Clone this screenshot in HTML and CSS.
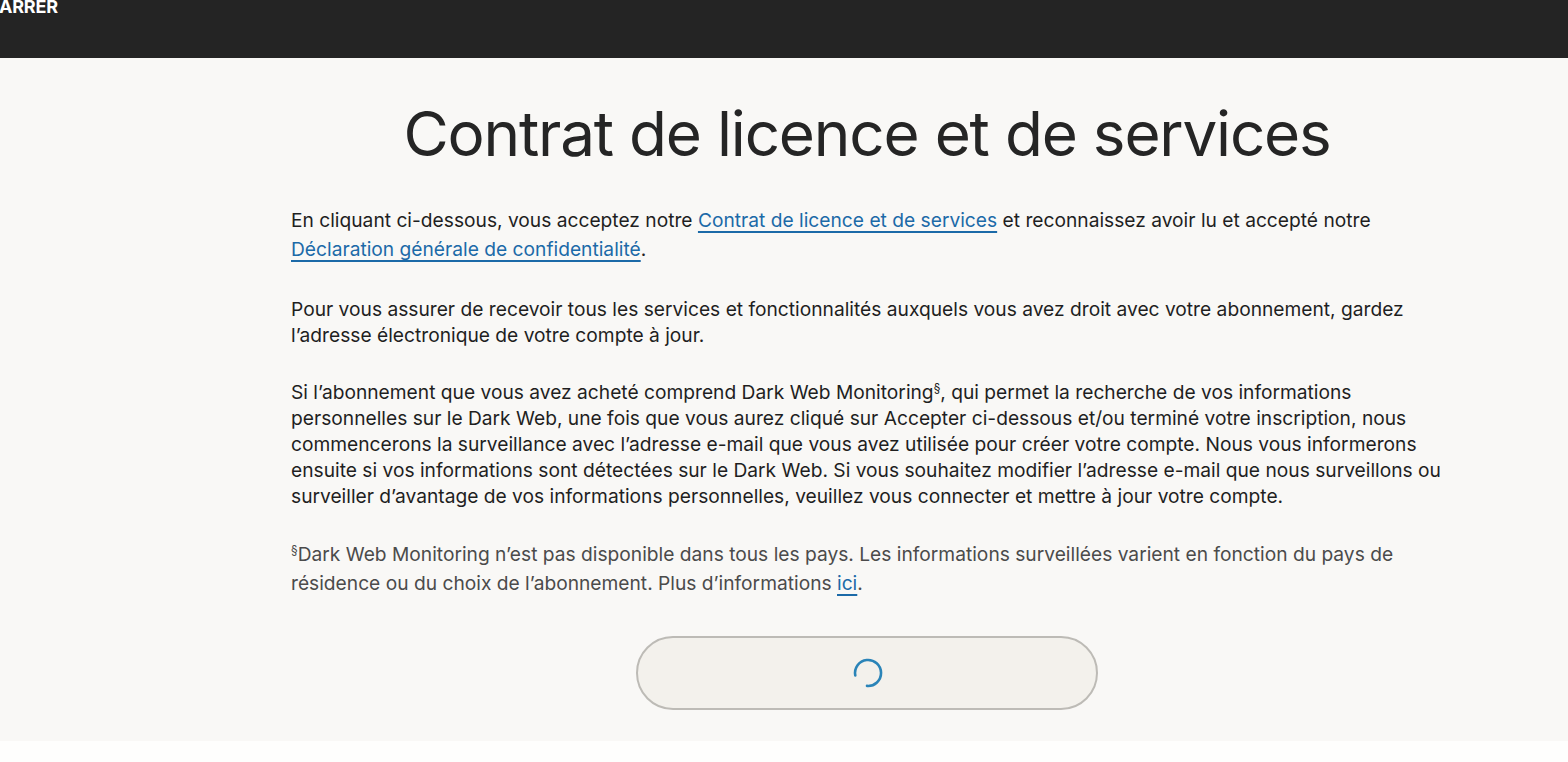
FILE: index.html
```html
<!DOCTYPE html>
<html lang="fr">
<head>
<meta charset="utf-8">
<title>Contrat de licence et de services</title>
<link rel="stylesheet" href="styles.css">
</head>
<body>
<header class="topbar">
  <span class="topbar-label">ARRER</span>
</header>
<main class="page">
  <div class="content">
    <h1 class="title">Contrat de licence et de services</h1>
    <p class="para para-links para-first">En cliquant ci-dessous, vous acceptez notre <a class="link" href="#">Contrat de licence et de services</a> et reconnaissez avoir lu et accepté notre <a class="link" href="#">Déclaration générale de confidentialité</a>.</p>
    <p class="para">Pour vous assurer de recevoir tous les services et fonctionnalités auxquels vous avez droit avec votre abonnement, gardez l’adresse électronique de votre compte à jour.</p>
    <p class="para">Si l’abonnement que vous avez acheté comprend Dark Web Monitoring<sup class="sup">§</sup>, qui permet la recherche de vos informations personnelles sur le Dark Web, une fois que vous aurez cliqué sur Accepter ci-dessous et/ou terminé votre inscription, nous commencerons la surveillance avec l’adresse e-mail que vous avez utilisée pour créer votre compte. Nous vous informerons ensuite si vos informations sont détectées sur le Dark Web. Si vous souhaitez modifier l’adresse e-mail que nous surveillons ou surveiller d’avantage de vos informations personnelles, veuillez vous connecter et mettre à jour votre compte.</p>
    <p class="para note para-links"><sup class="sup">§</sup>Dark Web Monitoring n’est pas disponible dans tous les pays. Les informations surveillées varient en fonction du pays de résidence ou du choix de l’abonnement. Plus d’informations <a class="link" href="#">ici</a>.</p>
    <div class="actions">
      <button class="btn" type="button" aria-label="Chargement">
        <svg class="spinner" width="34" height="34" viewBox="0 0 34 34">
          <path d="M4.3 19.5 A13 13 0 1 1 16 29.9" fill="none" stroke="#2a84b8" stroke-width="2.6" stroke-linecap="round"/>
        </svg>
      </button>
    </div>
  </div>
</main>
</body>
</html>
```

FILE: styles.css
```css
* { box-sizing: border-box; }

html, body {
  margin: 0;
  padding: 0;
  background: #fefefd;
  font-family: Inter, "Noto Sans", "Liberation Sans", sans-serif;
  color: #222222;
}

.topbar {
  height: 58px;
  background: #242424;
  position: relative;
}

.topbar-label {
  position: absolute;
  left: -1px;
  top: -4px;
  font-size: 18px;
  font-weight: 700;
  color: #ffffff;
  letter-spacing: -0.2px;
}

.page {
  background: #f9f8f6;
  height: 683px;
  padding: 38px 125px 0 291px;
}

.content {
  width: 1152px;
}

.title {
  margin: 0 0 34px;
  text-align: center;
  font-size: 62px;
  font-weight: 400;
  line-height: 76px;
  color: #252525;
  letter-spacing: -1.2px;
}

.para {
  margin: 0 0 31px;
  font-size: 19.2px;
  line-height: 26px;
  color: #1f1f1f;
}

.para-first {
  margin-bottom: 32px;
}

.para-links {
  line-height: 29px;
}

.note {
  color: #4b4b4b;
  margin-bottom: 38px;
}

.sup {
  font-size: 12px;
  line-height: 0;
  vertical-align: 7px;
}

.link {
  color: #1c6aa8;
  text-decoration: underline;
  text-decoration-thickness: 2px;
  text-underline-offset: 4px;
}

.actions {
  display: flex;
  justify-content: center;
}

.btn {
  width: 462px;
  height: 74px;
  border: 2px solid #bdbbb6;
  border-radius: 37px;
  background: #f3f1ec;
  display: flex;
  align-items: center;
  justify-content: center;
  padding: 0;
}

.spinner {
  display: block;
  margin-left: 2px;
}
```
